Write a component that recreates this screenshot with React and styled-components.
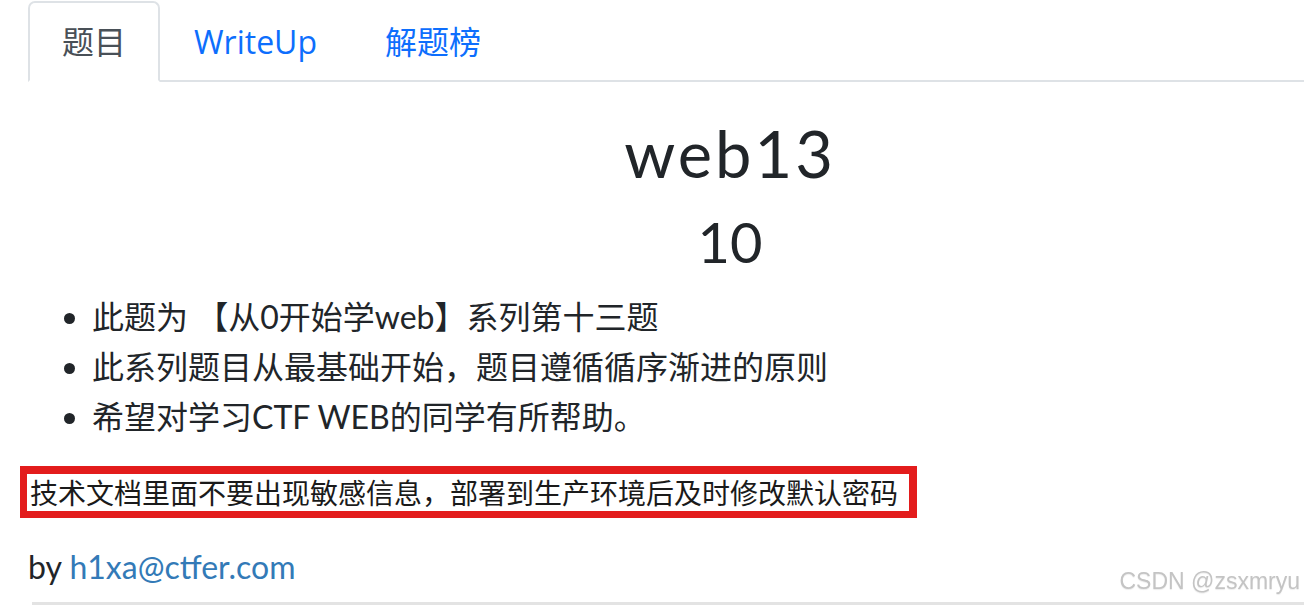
import styled, { createGlobalStyle } from "styled-components";

const GlobalStyle = createGlobalStyle`
    html, body {
        margin: 0;
        padding: 0;
        background: #fff;
        overflow: hidden;
    }
    body {
        font-family: Lato, "Noto Sans CJK SC", sans-serif;
        color: #212529;
    }
`;

const Page = styled.div`
    position: relative;
    width: 1432px;
    height: 606px;
    padding: 1px 0 0 28px;
    box-sizing: border-box;
`;

const Tabs = styled.ul`
    display: flex;
    list-style: none;
    margin: 0;
    padding: 0;
    border-bottom: 2px solid #dee2e6;
`;

const Tab = styled.li`
    margin-bottom: -2px;
`;

const TabLink = styled.a`
    display: block;
    padding: 15px 32px 14px;
    font-family: "Open Sans", "Noto Sans CJK SC", sans-serif;
    font-size: 32px;
    line-height: 48px;
    text-decoration: none;
    border: 2px solid transparent;
    border-radius: 7px 7px 0 0;
    color: ${p => (p.$active ? "#495057" : "#0d6efd")};
    background: ${p => (p.$active ? "#fff" : "transparent")};
    border-color: ${p => (p.$active ? "#dee2e6 #dee2e6 #fff" : "transparent")};
`;

const Title = styled.h1`
    margin: 32px 0 0;
    text-align: center;
    font-size: 65px;
    font-weight: 400;
    line-height: 1.2;
    letter-spacing: 3px;
`;

const Score = styled.h2`
    margin: 16px 0 0;
    text-align: center;
    font-size: 56px;
    font-weight: 400;
    line-height: 1.2;
`;

const Hints = styled.ul`
    margin: 17px 0 0;
    padding-left: 64px;
    font-size: 32px;
    line-height: 50px;
`;

const Notice = styled.div`
    display: inline-block;
    margin: 24px 0 0 -8px;
    padding: 0 11px 0 3px;
    border: 7px solid #e31c1c;
    border-top-width: 8px;
    border-right-width: 8px;
    font-family: "Noto Sans CJK SC", serif;
    font-size: 28px;
    line-height: 37px;
    color: #1a1a1a;
`;

const Author = styled.p`
    margin: 24px 0 0;
    font-size: 32px;
    line-height: 50px;

    a {
        color: #337ab7;
        text-decoration: none;
    }
`;

const Rule = styled.hr`
    margin: 10px 0 0 4px;
    border: 0;
    height: 3px;
    background: #e3e3e3;
`;

const Watermark = styled.div`
    position: fixed;
    right: 4px;
    bottom: 11px;
    font-family: "Liberation Sans", Arial, sans-serif;
    font-size: 23px;
    color: #c4c4c4;
    text-shadow: 0 1px 1px rgba(0, 0, 0, 0.08);
`;

const App = () => {
    return (
        <Page>
            <GlobalStyle />
            <Tabs>
                <Tab><TabLink $active>题目</TabLink></Tab>
                <Tab><TabLink>WriteUp</TabLink></Tab>
                <Tab><TabLink>解题榜</TabLink></Tab>
            </Tabs>
            <Title>web13</Title>
            <Score>10</Score>
            <Hints>
                <li>此题为 【从0开始学web】系列第十三题</li>
                <li>此系列题目从最基础开始，题目遵循循序渐进的原则</li>
                <li>希望对学习CTF WEB的同学有所帮助。</li>
            </Hints>
            <Notice>技术文档里面不要出现敏感信息，部署到生产环境后及时修改默认密码</Notice>
            <Author>by <a>h1xa@ctfer.com</a></Author>
            <Rule />
            <Watermark>CSDN @zsxmryu</Watermark>
        </Page>
    );
};

export default App;
